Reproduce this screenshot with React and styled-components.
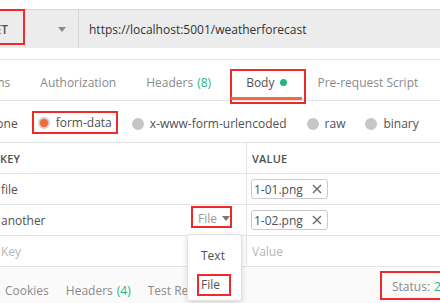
import React from 'react'
import styled, { createGlobalStyle } from 'styled-components'

const RED = '#ee2a2a'
const ORANGE = '#f26b3a'
const GREEN = '#26b47f'

const GlobalStyle = createGlobalStyle`
  html, body {
    margin: 0;
    padding: 0;
    background: #fff;
  }
  body {
    font-family: 'Open Sans', 'Noto Sans', sans-serif;
    font-size: 12px;
    color: #505050;
    overflow: hidden;
  }
  * {
    box-sizing: border-box;
  }
`

const Screen = styled.div`
  width: 440px;
  height: 303px;
  overflow: hidden;
  background: #fff;
`

const UrlBar = styled.div`
  display: flex;
  height: 39px;
  margin-top: 9px;
  background: #ececec;
  border-top: 1px solid #d9d9d9;
`

const MethodSelect = styled.div`
  width: 79px;
  flex-shrink: 0;
  display: flex;
  align-items: flex-start;
  border-right: 1px solid #d6d6d6;
`

const Method = styled.div`
  margin-left: -30px;
  margin-top: -1px;
  width: 55px;
  height: 36px;
  border: 2px solid ${RED};
  display: flex;
  align-items: center;
  justify-content: flex-end;
  padding: 4px 15px 0 0;
  font-weight: 600;
  color: #505050;
`

const Caret = styled.span`
  align-self: center;
  margin-left: auto;
  margin-right: ${({ gap }) => gap ?? 0}px;
  width: 0;
  height: 0;
  border-left: 4px solid transparent;
  border-right: 4px solid transparent;
  border-top: 5px solid ${({ color }) => color || '#8a8a8a'};
`

const UrlText = styled.div`
  flex: 1;
  display: flex;
  align-items: center;
  padding-left: 10px;
  color: #333;
  white-space: nowrap;
`

const Tabs = styled.div`
  display: flex;
  height: 42px;
  margin-top: 11px;
  margin-left: -47px;
  border-top: 1px solid #e8e8e8;
  border-bottom: 1px solid #e4e4e4;
`

const Tab = styled.div`
  position: relative;
  display: flex;
  align-items: center;
  padding: 5px 15px 0;
  margin-left: ${({ marked }) => (marked ? 5 : 0)}px;
  white-space: nowrap;
  color: ${({ active }) => (active ? '#505050' : '#8a8a8a')};

  ${({ active }) =>
    active &&
    `&::after {
      content: '';
      position: absolute;
      left: 0;
      right: 0;
      bottom: 0;
      height: 3px;
      background: ${ORANGE};
    }`}

  ${({ marked }) =>
    marked &&
    `&::before {
      content: '';
      position: absolute;
      left: -1px;
      right: -4px;
      top: 9px;
      bottom: -4px;
      border: 2px solid ${RED};
    }`}
`

const Count = styled.span`
  color: ${GREEN};
  margin-left: 4px;
`

const Dot = styled.span`
  width: 7px;
  height: 7px;
  border-radius: 50%;
  background: ${GREEN};
  margin-left: 6px;
`

const RadioRow = styled.div`
  display: flex;
  align-items: center;
  gap: 20px;
  height: 42px;
  padding-top: 4px;
  margin-left: -29px;
  border-bottom: 1px solid #e4e4e4;
`

const RadioOption = styled.div`
  display: flex;
  align-items: center;
  gap: 6px;
  white-space: nowrap;
  color: #505050;
  ${({ marked }) =>
    marked &&
    `border: 2px solid ${RED};
     padding: 0 4px;
     margin: -2px -6px 0;
     height: 23px;`}
`

const RadioDot = styled.span`
  width: 12px;
  height: 12px;
  border-radius: 50%;
  flex-shrink: 0;
  background: ${({ checked }) => (checked ? ORANGE : '#c6c6c6')};
  border: 2px solid ${({ checked }) => (checked ? '#d0d0d0' : '#c6c6c6')};
`

const Row = styled.div`
  display: grid;
  grid-template-columns: 246px 1fr;
  height: 31px;
  border-bottom: 1px solid #e4e4e4;
`

const KeyCell = styled.div`
  display: flex;
  align-items: center;
  justify-content: space-between;
  padding: 0 14px 0 1px;
  color: ${({ muted }) => (muted ? '#b5b5b5' : '#505050')};
`

const ValueCell = styled.div`
  display: flex;
  align-items: center;
  padding-left: 5px;
  border-left: 1px solid #e4e4e4;
  color: ${({ muted }) => (muted ? '#b5b5b5' : '#505050')};
`

const HeadLabel = styled.span`
  font-size: 11px;
  font-weight: 600;
  letter-spacing: 0.2px;
  color: #505050;
  margin-left: ${({ shift }) => shift ?? 0}px;
`

const Chip = styled.span`
  display: inline-flex;
  align-items: center;
  gap: 9px;
  height: 20px;
  padding: 0 5px 0 2px;
  margin-left: -1px;
  border: 1px solid #cacaca;
  border-radius: 3px;
  color: #505050;
`

const TypeSelect = styled.div`
  position: relative;
  align-self: flex-start;
  display: flex;
  align-items: center;
  gap: 5px;
  height: 22px;
  margin-top: 1px;
  padding: 3px 0 0 5px;
  border: 2px solid ${RED};
  color: #9a9a9a;
`

const Menu = styled.div`
  position: absolute;
  top: 26px;
  left: -6px;
  width: 55px;
  height: 67px;
  padding-top: 6px;
  background: #fff;
  border: 1px solid #e2e2e2;
  border-radius: 3px;
  box-shadow: 0 2px 6px rgba(0, 0, 0, 0.15);
  z-index: 5;
`

const MenuItem = styled.div`
  display: flex;
  align-items: center;
  height: 29px;
  padding-left: 13px;
  color: #505050;
`

const MenuMark = styled.span`
  display: flex;
  align-items: center;
  height: 22px;
  margin-left: -4px;
  padding: 0 9px 0 2px;
  border: 2px solid ${RED};
`

const Footer = styled.div`
  display: flex;
  align-items: center;
  gap: 17px;
  width: 460px;
  height: 46px;
  padding-left: 5px;
  background: #fafafa;
`

const FooterItem = styled.span`
  color: #8a8a8a;
  white-space: nowrap;
`

const Status = styled.div`
  margin-left: auto;
  align-self: flex-start;
  flex-shrink: 0;
  width: 80px;
  height: 29px;
  margin-top: 4px;
  padding: 2px 0 0 10px;
  display: flex;
  align-items: center;
  gap: 4px;
  border: 2px solid ${RED};
  white-space: nowrap;
  overflow: hidden;
  color: #8a8a8a;
`

const Green = styled.span`
  color: ${GREEN};
`

const Close = () => (
  <svg width="10" height="10" viewBox="0 0 10 10">
    <path d="M1 1 L9 9 M9 1 L1 9" stroke="#6a6a6a" strokeWidth="1.4" fill="none" />
  </svg>
)

export default function App() {
  return (
    <Screen>
      <GlobalStyle />
      <UrlBar>
        <MethodSelect>
          <Method>GET</Method>
          <Caret gap={12} />
        </MethodSelect>
        <UrlText>https://localhost:5001/weatherforecast</UrlText>
      </UrlBar>

      <Tabs>
        <Tab>Params</Tab>
        <Tab>Authorization</Tab>
        <Tab>
          Headers<Count>(8)</Count>
        </Tab>
        <Tab active marked>
          Body<Dot />
        </Tab>
        <Tab>Pre-request Script</Tab>
        <Tab>Tests</Tab>
      </Tabs>

      <RadioRow>
        <RadioOption>
          <RadioDot />
          none
        </RadioOption>
        <RadioOption marked>
          <RadioDot checked />
          form-data
        </RadioOption>
        <RadioOption>
          <RadioDot />
          x-www-form-urlencoded
        </RadioOption>
        <RadioOption>
          <RadioDot />
          raw
        </RadioOption>
        <RadioOption>
          <RadioDot />
          binary
        </RadioOption>
      </RadioRow>

      <Row>
        <KeyCell>
          <HeadLabel shift={-1}>KEY</HeadLabel>
        </KeyCell>
        <ValueCell>
          <HeadLabel>VALUE</HeadLabel>
        </ValueCell>
      </Row>
      <Row>
        <KeyCell>file</KeyCell>
        <ValueCell>
          <Chip>
            1-01.png
            <Close />
          </Chip>
        </ValueCell>
      </Row>
      <Row>
        <KeyCell>
          another
          <TypeSelect>
            File
            <Caret color="#777" />
            <Menu>
              <MenuItem>Text</MenuItem>
              <MenuItem>
                <MenuMark>File</MenuMark>
              </MenuItem>
            </Menu>
          </TypeSelect>
        </KeyCell>
        <ValueCell>
          <Chip>
            1-02.png
            <Close />
          </Chip>
        </ValueCell>
      </Row>
      <Row>
        <KeyCell muted>Key</KeyCell>
        <ValueCell muted>Value</ValueCell>
      </Row>

      <Footer>
        <FooterItem>Cookies</FooterItem>
        <FooterItem>
          Headers<Count>(4)</Count>
        </FooterItem>
        <FooterItem>Test Results</FooterItem>
        <Status>
          Status: <Green>200 OK</Green>
        </Status>
      </Footer>
    </Screen>
  )
}
